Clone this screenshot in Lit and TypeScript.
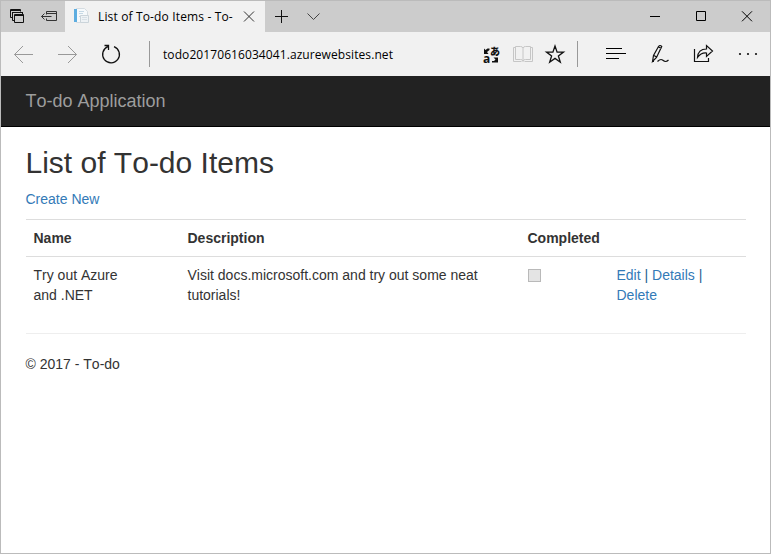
import { LitElement, html, css, svg } from "lit";
import { customElement } from "lit/decorators.js";

// Each icon is drawn on the window's own grid; the viewBox picks out its cell.
const cell = (x: number, y: number, w: number, h: number, body: unknown) => html`
  <svg width=${w} height=${h} viewBox="${x} ${y} ${w} ${h}" fill="none" stroke="#111" stroke-width="1">${body}</svg>`;

@customElement("title-bar")
class TitleBar extends LitElement {
  static styles = css`
    :host { display: flex; height: 31px; background: #ccc; }
    svg { display: block; flex: none; }
    .tab { width: 200px; display: flex; background: #f1f1f1; }
    .label { width: 136px; font: 12px/31px "Open Sans", "Noto Sans", sans-serif; color: #000; white-space: nowrap; letter-spacing: 0.15px; font-kerning: none; }
    .gap { flex: 1; }
  `;
  render() {
    return html`
      ${cell(1, 1, 64, 31, svg`
        <path d="M12.500 17.500h-2v-8h10v2M10 10.500h11M14.500 20.500h-2v-8h10v2M12 12.500h11"/>
        <path d="M14.500 14.500h9v8h-9zM14 15.500h10"/>
        <path stroke="#333" d="M46.500 14.500v-3h10v9h-10v-2M46 13.500h11M41.500 16.500h10M44.500 13.500l-3 3l3 3"/>`)}
      <div class="tab">
        ${cell(65, 1, 33, 31, svg`
          <path fill="#f6f9fb" stroke="#d5dce1" d="M76.500 8.500h8l3 3v11h-11z"/>
          <path fill="#5dade0" stroke="none" d="M74 9h3v13h-3z"/>
          <path stroke="#c5d8e5" d="M79 11.500h5M79 13.500h4M79 16.500h2"/>
          <path fill="#eef2f5" stroke="#cbd4da" d="M80.500 15.500h8v7h-8z"/>
          <path stroke="#d8e0e6" d="M82 17.500h5M82 19.500h5"/>`)}
        <span class="label">List of To-do Items - To-</span>
        ${cell(234, 1, 31, 31, svg`<path stroke="#333" d="M244 11.500l10 10M254 11.500l-10 10"/>`)}
      </div>
      ${cell(265, 1, 65, 31, svg`<path d="M275 16.500h13M281.500 10v13"/><path stroke="#444" d="M307.500 13.500l6 6l6-6"/>`)}
      <div class="gap"></div>
      ${cell(632, 1, 138, 31, svg`<path stroke="#000" d="M650 16.500h10M696.500 11.500h9v9h-9zM742 11.300l10 10M752 11.300l-10 10"/>`)}
    `;
  }
}

@customElement("address-bar")
class AddressBar extends LitElement {
  static styles = css`
    :host { display: flex; height: 44px; background: #f1f1f1; }
    svg { display: block; flex: none; }
    .url { flex: 1; font: 12px/46px "Open Sans", "Noto Sans", sans-serif; color: #000; white-space: nowrap; letter-spacing: 0.085px; }
    .kana { font: 900 10px "Noto Sans CJK JP", sans-serif; }
    .latin { font: bold 12px "Open Sans", sans-serif; }
  `;
  render() {
    return html`
      ${cell(1, 32, 162, 44, svg`
        <path stroke="#999" d="M33 54.500H14.500M23 46l-8.500 8.500l8.500 8.500M58 54.500h18.500M68 46l8.500 8.500l-8.500 8.500"/>
        <path stroke-width="1.300" d="M107.800 46.700A8.400 8.400 0 1 0 114 46.600M104.500 45.500h4v4.500"/>
        <path stroke="#999" d="M149.500 41v26"/>`)}
      <span class="url">todo20170616034041.azurewebsites.net</span>
      ${cell(475, 32, 295, 44, svg`
        <g fill="#111" stroke="none">
          <text class="latin" x="483" y="62.500">a</text>
          <text class="kana" x="490" y="54.500">あ</text>
          <path d="M484 48.500l1.500 1.500l2-1.500h2v1.500l-2.500 2l1.500 2h-4.500zM498 62.500h-6v-1.500h2l1.500-1.500l-2-2h4.500z"/>
        </g>
        <path stroke="#c6c6c6" d="M521.500 61.500h-8v-14h2M524.500 61.500h8v-14h-2M515.500 46.500h5q2 0 2.500 1.500q.5-1.500 2.500-1.500h5v13h-5q-2 0-2.500 1.500q-.5-1.500-2.500-1.500h-5zM523 48v14"/>
        <path stroke-width="1.300" d="M555 46l2.100 6.100h6.400l-5.100 3.900l1.900 6.200l-5.300-3.800l-5.300 3.800l1.900-6.200l-5.100-3.900h6.400z"/>
        <path stroke="#999" d="M577.500 41v26"/>
        <path stroke="#000" d="M606 48.500h16M606 53.500h20M606 58.500h13"/>
        <path stroke-width="1.200" d="M652.500 61.500l1-6l5-9q1.500-2 3.200 0l-5.200 11zM654 55.500l2.500 1.500M658.500 47l3 1.500M652 61.500h2M657.500 61.500q3-3 5-1.500t3 1.500q1.500 0 3-1.500"/>
        <path stroke-width="1.200" d="M694.500 49v12.500h14v-3.500M697.500 57.500q.5-8.500 9-8.500v-3.500l6 5.500l-6 5.500v-3.500q-5.500-.5-9 4.500z"/>
        <g fill="#111" stroke="none"><circle cx="740" cy="54" r="1.100"/><circle cx="748" cy="54" r="1.100"/><circle cx="756" cy="54" r="1.100"/></g>`)}
    `;
  }
}

@customElement("todo-page")
class TodoPage extends LitElement {
  static styles = css`
    :host { display: block; font: 14px/20px "Liberation Sans", Arial, sans-serif; color: #333; font-kerning: none; }
    nav { height: 50px; background: #222; border-bottom: 1px solid #000; padding-left: 24.5px; font-size: 18px; line-height: 50px; color: #9d9d9d; }
    main { padding: 0 24px 0 24.5px; }
    h2 { margin: 19px 0 10px; font-size: 30px; font-weight: normal; line-height: 33px; }
    a { color: #337ab7; text-decoration: none; }
    p { margin: 0 0 10px; }
    table { width: 720.5px; table-layout: fixed; border-collapse: collapse; margin-bottom: 20px; }
    th, td { padding: 8px; text-align: left; vertical-align: top; border-top: 1px solid #ddd; }
    .name { width: 138px; }
    .description { width: 324px; }
    .completed { width: 73px; }
    .wrap { display: block; max-width: 100px; }
    .desc { display: block; max-width: 300px; }
    .check { display: block; width: 11px; height: 11px; margin-top: 4px; background: #e4e4e4; border: 1px solid #b9b9b9; }
    hr { height: 0; border: 0; border-top: 1px solid #eee; margin: 20px 0; }
    .bar { color: #286090; }
  `;
  render() {
    return html`
      <nav>To-do Application</nav>
      <main>
        <h2>List of To-do Items</h2>
        <p><a>Create New</a></p>
        <table>
          <thead><tr><th class="name">Name</th><th class="description">Description</th><th class="completed">Completed</th><th></th></tr></thead>
          <tbody><tr>
            <td><span class="wrap">Try out Azure and .NET</span></td>
            <td><span class="desc">Visit docs.microsoft.com and try out some neat tutorials!</span></td>
            <td><span class="check"></span></td>
            <td><span class="wrap"><a>Edit</a> <span class="bar">|</span> <a>Details</a> <span class="bar">|</span> <a>Delete</a></span></td>
          </tr></tbody>
        </table>
        <hr>
        <p>© 2017 - To-do</p>
      </main>
    `;
  }
}

@customElement("app-root")
class AppRoot extends LitElement {
  static styles = css`
    :host { display: block; box-sizing: border-box; width: 771px; height: 554px; border: 1px solid #bbb; background: #fff; overflow: hidden; }
  `;
  render() {
    return html`<title-bar></title-bar><address-bar></address-bar><todo-page></todo-page>`;
  }
}
